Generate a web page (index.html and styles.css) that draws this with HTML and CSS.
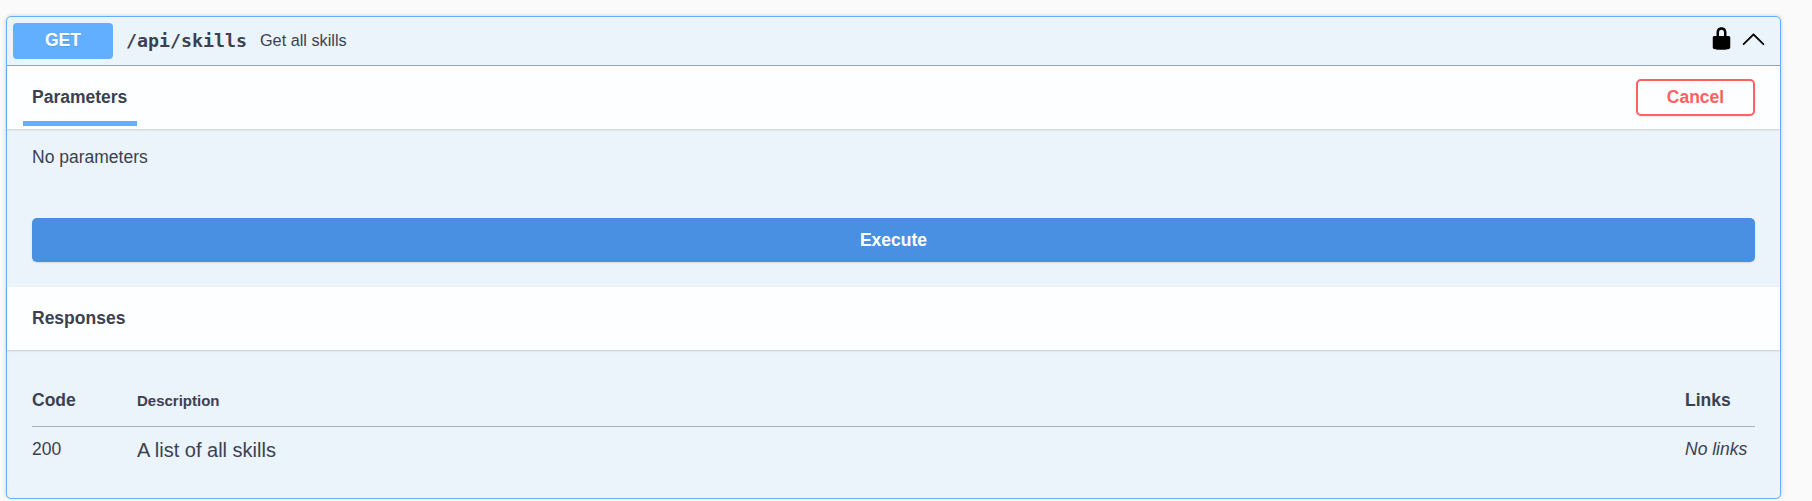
FILE: index.html
```html
<!DOCTYPE html>
<html lang="en">
<head>
<meta charset="utf-8">
<title>GET /api/skills</title>
<link rel="stylesheet" href="styles.css">
</head>
<body>
<section class="opblock">
  <header class="summary">
    <span class="method">GET</span>
    <span class="path">/api/skills</span>
    <span class="description">Get all skills</span>
    <svg class="icon lock" viewBox="0 0 20 20"><path d="M15.8 8H14V5.6C14 2.703 12.665 1 10 1 7.334 1 6 2.703 6 5.6V8H4c-.553 0-1 .646-1 1.199V17c0 .549.428 1.139.951 1.307l1.197.387C5.672 18.861 6.55 19 7.1 19h5.8c.549 0 1.428-.139 1.951-.307l1.196-.387c.524-.167.953-.757.953-1.306V9.199C17 8.646 16.352 8 15.8 8zM12 8H8V5.199C8 3.754 8.797 3 10 3c1.203 0 2 .754 2 2.199V8z"/></svg>
    <svg class="icon" viewBox="0 0 20 20"><path d="M17.418 14.908c.272.268.709.268.979 0s.271-.701 0-.969l-7.908-7.83c-.27-.268-.707-.268-.979 0l-7.908 7.83c-.27.268-.27.701 0 .969.271.268.709.267.979 0L10 7.767l7.418 7.141z"/></svg>
  </header>
  <div class="section-header">
    <h4 class="tab">Parameters</h4>
    <button class="btn cancel">Cancel</button>
  </div>
  <p class="no-params">No parameters</p>
  <div class="execute-wrap"><button class="btn execute">Execute</button></div>
  <div class="section-header"><h4 class="title">Responses</h4></div>
  <div class="responses">
    <div class="row head">
      <span>Code</span><span class="col-desc">Description</span><span>Links</span>
    </div>
    <div class="row">
      <span>200</span><span class="desc-text">A list of all skills</span><i>No links</i>
    </div>
  </div>
</section>
</body>
</html>
```
FILE: styles.css
```css
* { box-sizing: border-box; }
body {
  margin: 0;
  padding: 16px 31px 0 6px;
  background: #fafafa;
  color: #3b4151;
  font: 17.5px/20px "Liberation Sans", Arial, sans-serif;
}
h4, p { margin: 0; font-size: 17.5px; }
.opblock {
  height: 483px;
  border: 1px solid #61affe;
  border-radius: 5px;
  background: #ebf3fb;
  box-shadow: 0 0 4px rgba(0, 0, 0, .19);
}
.summary {
  display: flex;
  align-items: center;
  height: 49px;
  padding: 0 14px 0 6px;
  border-bottom: 1px solid #61affe;
}
.method {
  width: 100px;
  height: 36px;
  border-radius: 4px;
  background: #61affe;
  color: #fff;
  font-weight: 700;
  line-height: 34px;
  text-align: center;
  text-shadow: 0 1px 0 rgba(0, 0, 0, .1);
}
.path {
  padding: 0 12px 0 13px;
  font: 700 18.27px/20px "DejaVu Sans Mono", monospace;
}
.description { flex: 1; padding: 0 0 2px 1px; font-size: 16.25px; }
.icon { width: 25px; height: 25px; margin-bottom: 5px; }
.lock { margin-right: 7px; }
.section-header {
  display: flex;
  align-items: center;
  justify-content: space-between;
  height: 63px;
  padding: 0 25px 0 16px;
  background: rgba(255, 255, 255, .85);
  box-shadow: 0 1px 2px rgba(0, 0, 0, .15);
}
.tab {
  align-self: flex-end;
  height: 39px;
  margin-bottom: 3px;
  padding: 0 10px 0 9px;
  border-bottom: 5px solid #61affe;
}
.title { padding: 0 0 1px 9px; }
.btn {
  padding: 0;
  border-radius: 5px;
  font: 700 17.5px/20px "Liberation Sans", Arial, sans-serif;
  box-shadow: 0 1px 2px rgba(0, 0, 0, .1);
}
.cancel {
  width: 119px;
  height: 37px;
  padding-bottom: 1px;
  border: 2px solid #ff6060;
  background: transparent;
  color: #ff6060;
}
.no-params { height: 89px; padding: 18px 25px 0; }
.execute-wrap { height: 69px; padding: 0 25px; }
.execute {
  width: 100%;
  height: 44px;
  border: 0;
  background: #4990e2;
  color: #fff;
}
.responses { padding: 25px 25px 0; }
.row { display: grid; grid-template-columns: 105px 1fr 70px; padding-top: 12px; }
.head {
  height: 52px;
  padding-top: 15px;
  border-bottom: 1px solid #a9b2bd;
  font-weight: 700;
}
.col-desc { padding-top: 1px; font-size: 15px; }
.desc-text { padding-top: 1px; font-size: 20px; }
```
